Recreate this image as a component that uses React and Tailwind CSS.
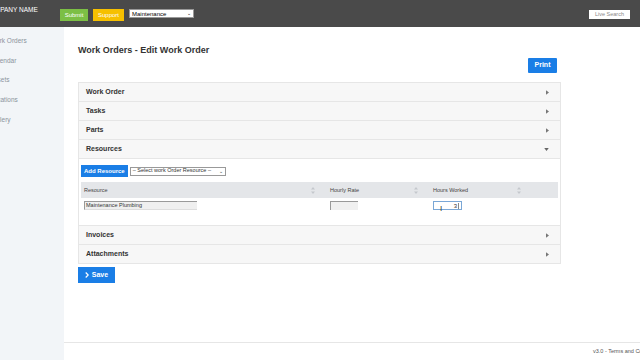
import React from "react";

function Caret({ down }) {
    return down ? (
        <svg width="5" height="3" viewBox="0 0 6 4" className="text-[#666]">
            <path d="M0 0 L6 0 L3 4 Z" fill="currentColor" />
        </svg>
    ) : (
        <svg width="3" height="5" viewBox="0 0 4 6" className="text-[#777]">
            <path d="M0 0 L4 3 L0 6 Z" fill="currentColor" />
        </svg>
    );
}

function SortIcon() {
    return (
        <svg width="4" height="7" viewBox="0 0 4 7" className="text-[#c4c7cc]">
            <path d="M2 0 L4 2.5 L0 2.5 Z M2 7 L4 4.5 L0 4.5 Z" fill="currentColor" />
        </svg>
    );
}

function Section({ title, open }) {
    return (
        <div className="h-[19px] flex items-center justify-between px-[7px] pr-[11px] bg-[#f7f7f7] border-b border-[#e6e6e6]">
            <span className="text-[7px] font-bold text-[#333]">{title}</span>
            <Caret down={open} />
        </div>
    );
}

export default function App() {
    const nav = ["Work Orders", "Calendar", "Assets", "Locations", "Gallery"];

    return (
        <div className="w-[640px] h-[360px] overflow-hidden flex flex-col bg-white font-['Liberation_Sans',Arial,sans-serif]">
            {/* Top bar */}
            <div className="h-[27px] bg-[#4a4a4a] flex items-start shrink-0">
                <div className="w-[60px] shrink-0 overflow-hidden pt-[5px]">
                    <span className="block -ml-[15px] text-[6.5px] text-white whitespace-nowrap">COMPANY NAME</span>
                </div>
                <div className="flex items-start gap-[5px] pt-[9px]">
                    <button className="h-[12px] w-[28px] bg-[#7cbf45] text-white text-[6px] leading-none">Submit</button>
                    <button className="h-[12px] w-[31px] bg-[#f6c000] text-white text-[6px] leading-none">Support</button>
                    <div className="h-[9px] w-[65px] bg-white border border-[#999] flex items-center justify-between px-[2px]">
                        <span className="text-[6px] text-black leading-none">Maintenance</span>
                        <span className="text-[5px] text-black leading-none">&#8964;</span>
                    </div>
                </div>
                <div className="ml-auto mr-[10px] mt-[10px] h-[9px] w-[41px] bg-white flex items-center justify-center">
                    <span className="text-[5.5px] text-[#888] leading-none">Live Search</span>
                </div>
            </div>

            <div className="flex flex-1 min-h-0">
                {/* Sidebar */}
                <div className="w-[64px] shrink-0 bg-[#f2f5f8] overflow-hidden pt-[4px]">
                    {nav.map((n) => (
                        <div key={n} className="h-[19.7px] flex items-center">
                            <span className="-ml-[10px] text-[6.5px] text-[#8b939c] whitespace-nowrap">{n}</span>
                        </div>
                    ))}
                </div>

                {/* Main */}
                <div className="flex-1 min-w-0 flex flex-col overflow-hidden">
                    <div className="flex-1 pl-[14px] pr-[79px] pt-[17px]">
                        <h1 className="text-[9px] font-bold text-[#333] leading-[12px]">Work Orders - Edit Work Order</h1>
                        <div className="flex justify-end mt-[2px] pr-[4px]">
                            <button className="h-[15px] w-[29px] bg-[#1a7ee6] text-white text-[7px] font-bold rounded-[1px]">Print</button>
                        </div>
                        <div className="mt-[9px] border border-b-0 border-[#e6e6e6]">
                            <Section title="Work Order" />
                            <Section title="Tasks" />
                            <Section title="Parts" />
                            <Section title="Resources" open />
                            <div className="h-[67px] bg-white border-b border-[#e6e6e6] px-[2px] pt-[6px]">
                                <div className="flex items-center gap-[2px]">
                                    <button className="h-[12px] px-[3px] bg-[#1a7ee6] text-white text-[6px] font-bold whitespace-nowrap">Add Resource</button>
                                    <div className="h-[9px] w-[96px] border border-[#999] bg-white flex items-center justify-between px-[2px]">
                                        <span className="text-[5.5px] text-[#333] leading-none whitespace-nowrap">– Select work Order Resource –</span>
                                        <span className="text-[5px] text-[#333] leading-none">&#8964;</span>
                                    </div>
                                </div>
                                <div className="mt-[5px] h-[16px] bg-[#e4e6e9] flex items-center text-[5.5px] text-[#444]">
                                    <div className="w-[246px] flex items-center justify-between pl-[3px] pr-[12px]">
                                        <span>Resource</span>
                                        <SortIcon />
                                    </div>
                                    <div className="w-[103px] flex items-center justify-between pl-[3px] pr-[12px]">
                                        <span>Hourly Rate</span>
                                        <SortIcon />
                                    </div>
                                    <div className="w-[103px] flex items-center justify-between pl-[3px] pr-[12px]">
                                        <span>Hours Worked</span>
                                        <SortIcon />
                                    </div>
                                </div>
                                <div className="flex items-start mt-[3px]">
                                    <div className="w-[246px] pl-[3px]">
                                        <div className="h-[9px] w-[113px] bg-[#efefef] border-t border-l border-[#999] border-b border-b-[#ddd] flex items-center px-[1px]">
                                            <span className="text-[5.5px] text-[#333] leading-none">Maintenance Plumbing</span>
                                        </div>
                                    </div>
                                    <div className="w-[103px] pl-[3px]">
                                        <div className="h-[9px] w-[28px] bg-[#f0f0f0] border-t border-l border-[#999]" />
                                    </div>
                                    <div className="w-[103px] pl-[3px] relative">
                                        <div className="h-[9px] w-[29px] bg-white border border-[#7aa7d6] flex items-center justify-end pr-[1px]">
                                            <span className="text-[6px] text-[#333] leading-none">3</span>
                                            <span className="ml-[1px] w-[2px] h-[6px] border-l border-[#888]" />
                                        </div>
                                        <span className="absolute left-[10px] top-[4px] text-[8px] text-[#333] leading-none">I</span>
                                    </div>
                                </div>
                            </div>
                            <Section title="Invoices" />
                            <Section title="Attachments" />
                        </div>
                        <button className="mt-[3px] h-[16px] w-[37px] bg-[#1a7ee6] text-white text-[7px] font-bold flex items-center justify-center gap-[3px]">
                            <svg width="4" height="6" viewBox="0 0 4 6">
                                <path d="M0.7 0.5 L3.2 3 L0.7 5.5" stroke="white" strokeWidth="1.2" fill="none" />
                            </svg>
                            Save
                        </button>
                    </div>
                    <div className="h-[18px] border-t border-[#e6e6e6] flex items-center pl-[529px] overflow-hidden shrink-0">
                        <span className="text-[5.5px] text-[#555] whitespace-nowrap">v3.0 - Terms and Conditions</span>
                    </div>
                </div>
            </div>
        </div>
    );
}
